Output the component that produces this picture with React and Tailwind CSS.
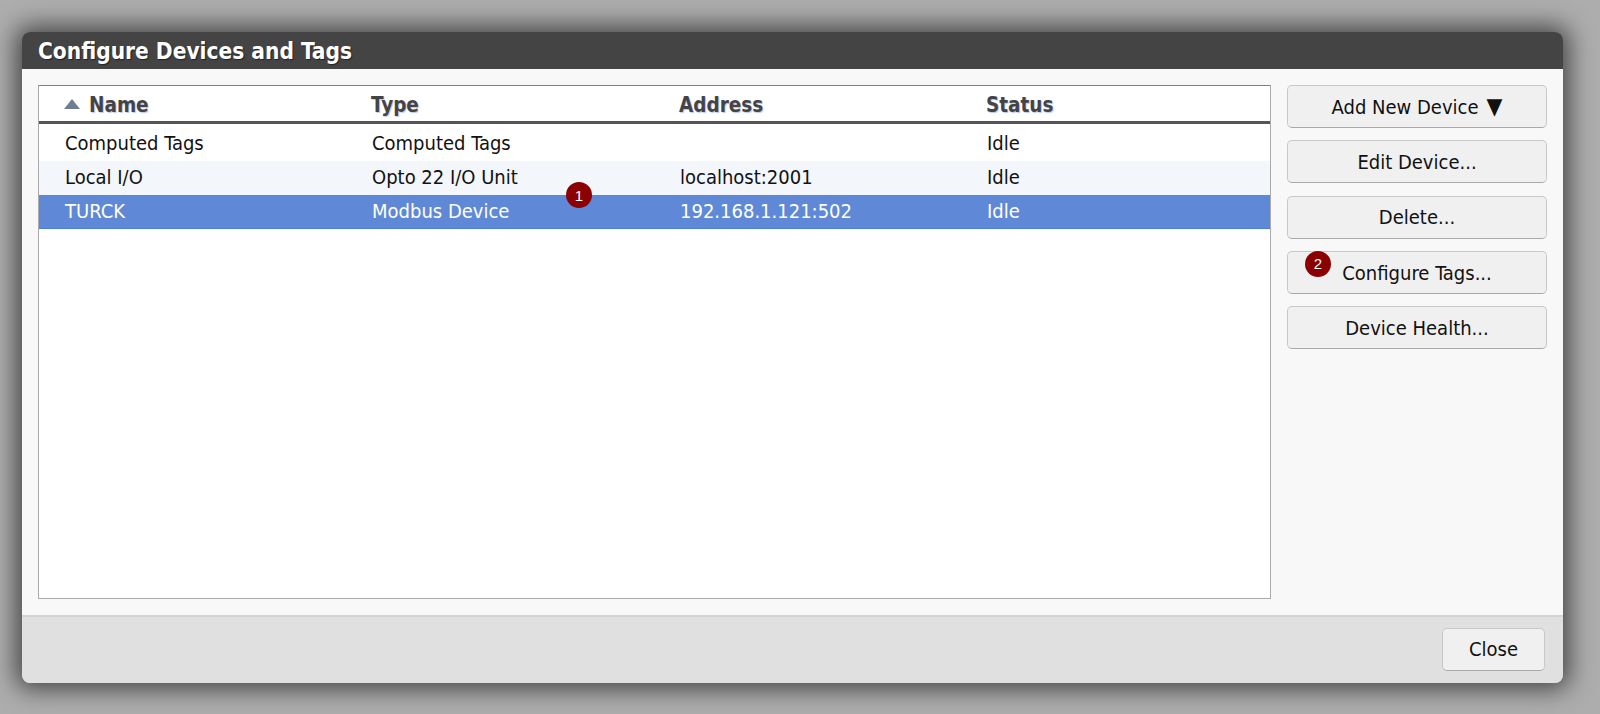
import React from "react";

const font = "font-['DejaVu_Sans'] [font-stretch:condensed]";

const rows = [
  { name: "Computed Tags", type: "Computed Tags", address: "", status: "Idle", bg: "bg-white text-[#111]" },
  { name: "Local I/O", type: "Opto 22 I/O Unit", address: "localhost:2001", status: "Idle", bg: "bg-[#f3f6fb] text-[#111]" },
  { name: "TURCK", type: "Modbus Device", address: "192.168.1.121:502", status: "Idle", bg: "bg-[#5f89d6] text-white border-b border-[#4a7fdc]" },
];

function Badge({ n, className }) {
  return (
    <span className={"absolute flex h-[26px] w-[26px] items-center justify-center rounded-full bg-[#8b0000] font-['Liberation_Sans'] text-[15px] leading-none text-white " + className}>
      {n}
    </span>
  );
}

function Btn({ children, className = "" }) {
  return (
    <button className={"relative flex h-[43px] items-center justify-center rounded-[5px] border border-[#c8c8c8] border-b-[#a9a9a9] bg-[#f0f0f0] text-[20px] text-[#111] " + className}>
      {children}
    </button>
  );
}

const head = "text-[20.5px] font-bold text-[#444] [text-shadow:1px_1px_1px_#bcc6f0]";

export default function App() {
  return (
    <div className={"h-[714px] w-[1600px] overflow-hidden bg-[#adadad] pl-[22px] pt-[32px] " + font}>
      <div className="w-[1541px] overflow-hidden rounded-[8px] shadow-[0_0_24px_6px_rgba(0,0,0,0.6)]">
        <div className="flex h-[37px] items-center bg-[#444444] pl-[16px] pt-[2px] text-[22.5px] font-bold text-white [text-shadow:1px_1px_1px_#222]">
          Configure Devices and Tags
        </div>
        <div className="flex h-[546px] gap-[16px] bg-[#f8f8f8] px-[16px] pt-[16px]">
          <div className="h-[514px] w-[1233px] border border-[#aaaaaa] border-t-[#808080] bg-white">
            <div className="grid h-[38px] grid-cols-[332px_308px_307px_1fr] items-center border-b-[3px] border-[#555555] pt-[4px]">
              <div className={"flex items-center pl-[25px] " + head}>
                <svg width="16" height="10" viewBox="0 0 16 10" className="mb-[3px] mr-[9px]">
                  <path d="M0 10 L8 0 L16 10 Z" fill="#6f7f93" />
                </svg>
                Name
              </div>
              <div className={head}>Type</div>
              <div className={head}>Address</div>
              <div className={head}>Status</div>
            </div>
            <div className="pt-[3px]">
              {rows.map((r, i) => (
                <div key={r.name} className={"relative grid h-[34px] grid-cols-[333px_308px_307px_1fr] items-center pb-[2px] text-[20px] " + r.bg}>
                  <div className="pl-[26px]">{r.name}</div>
                  <div>{r.type}</div>
                  <div>{r.address}</div>
                  <div>{r.status}</div>
                  {i === 2 && <Badge n="1" className="left-[527px] top-[-13px]" />}
                </div>
              ))}
            </div>
          </div>
          <div className="flex w-[260px] flex-col gap-[12.3px]">
            <Btn>
              Add New Device
              <span className="ml-[8px] text-[23px] leading-none">▼</span>
            </Btn>
            <Btn>Edit Device...</Btn>
            <Btn>Delete...</Btn>
            <Btn className="pt-[2px]">
              Configure Tags...
              <Badge n="2" className="left-[17px] top-[-1px]" />
            </Btn>
            <Btn>Device Health...</Btn>
          </div>
        </div>
        <div className="flex h-[68px] items-center justify-end border-t-2 border-[#d4d4d4] bg-[#e0e0e0] pb-[2px] pr-[18px]">
          <Btn className="w-[103px]">Close</Btn>
        </div>
      </div>
    </div>
  );
}
